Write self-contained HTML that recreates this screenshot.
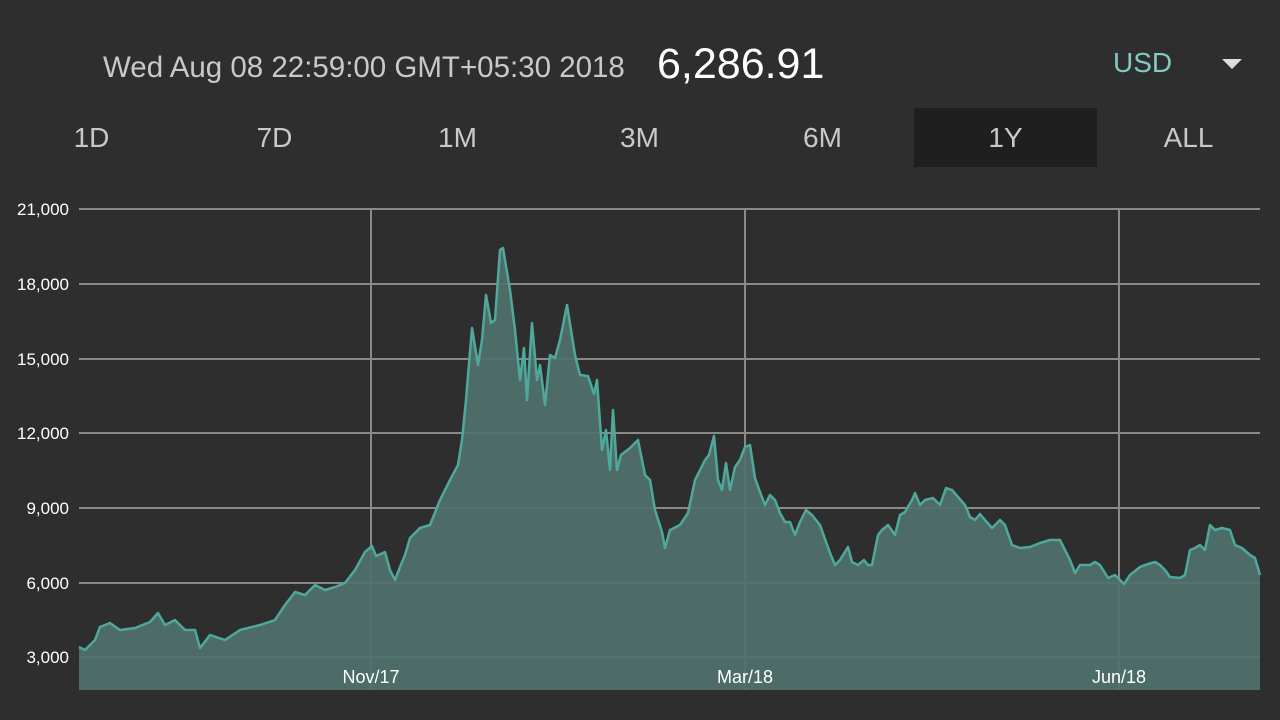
<!DOCTYPE html>
<html><head><meta charset="utf-8"><style>
body{margin:0;width:1280px;height:720px;background:#2e2e2e;font-family:"Liberation Sans",sans-serif;overflow:hidden;position:relative}
.t{position:absolute;white-space:nowrap}
.tab{position:absolute;top:108px;height:59px;width:183px;line-height:59px;text-align:center;font-size:28px;color:#c9c9c9}
</style></head><body>
<div class="t" style="left:103px;top:51px;font-size:29.5px;color:#c9c9c9">Wed Aug 08 22:59:00 GMT+05:30 2018</div>
<div class="t" style="left:657px;top:40px;font-size:43px;color:#fff">6,286.91</div>
<div class="t" style="left:1113px;top:47px;font-size:28px;color:#80cbc4">USD</div>
<svg class="t" style="left:1220px;top:57px" width="24" height="14"><path d="M2 2 L22 2 L12 12 Z" fill="#ddd"/></svg>
<div class="tab" style="left:0">1D</div>
<div class="tab" style="left:183px">7D</div>
<div class="tab" style="left:366px">1M</div>
<div class="tab" style="left:548px">3M</div>
<div class="tab" style="left:731px">6M</div>
<div class="tab" style="left:914px;background:#1f1f1f">1Y</div>
<div class="tab" style="left:1097px">ALL</div>
<svg class="t" style="left:0;top:0" width="1280" height="720">
<g font-size="17" fill="#fff" text-anchor="end" font-family="Liberation Sans">
<text x="69" y="215">21,000</text><text x="69" y="290">18,000</text><text x="69" y="365">15,000</text>
<text x="69" y="439">12,000</text><text x="69" y="514">9,000</text><text x="69" y="589">6,000</text><text x="69" y="663">3,000</text>
</g>
<g stroke="#8a8a8a" stroke-width="2">
<line x1="79" y1="209" x2="1260" y2="209"/><line x1="79" y1="284" x2="1260" y2="284"/><line x1="79" y1="359" x2="1260" y2="359"/>
<line x1="79" y1="433" x2="1260" y2="433"/><line x1="79" y1="508" x2="1260" y2="508"/><line x1="79" y1="583" x2="1260" y2="583"/><line x1="79" y1="657" x2="1260" y2="657"/>
<line x1="371" y1="209" x2="371" y2="690"/><line x1="745" y1="209" x2="745" y2="690"/><line x1="1119" y1="209" x2="1119" y2="690"/>
</g>
<polygon fill="#50716c" fill-opacity="0.93" points="79,690 79,647 85,650 95,640 100,627 110,623 120,630 135,628 150,622 158,613 165,625 175,620 185,630 195,630 200,648 210,635 225,640 240,630 260,625 275,620 285,605 295,592 305,595 315,585 325,590 335,587 345,583 355,570 365,552 372,546 376,556 385,552 390,570 395,580 400,567 405,555 410,538 420,528 430,525 440,500 450,480 458,465 462,440 466,400 472,328 478,365 482,340 486,295 491,323 495,320 500,250 503,248 510,290 515,330 520,380 524,348 527,400 532,323 537,380 540,365 545,405 550,355 555,358 560,340 567,305 575,355 580,375 588,376 594,394 597,380 602,450 606,430 610,470 613,410 617,470 621,455 630,448 638,440 645,475 650,480 655,510 662,532 665,548 670,530 680,525 688,513 695,480 700,470 705,460 709,455 714,436 718,480 722,490 726,463 730,490 735,467 740,460 745,447 750,445 755,478 760,492 765,505 770,495 775,500 780,513 785,522 790,522 795,535 800,522 806,510 812,515 820,525 830,553 835,565 840,560 848,547 852,562 858,565 864,560 868,565 872,565 878,535 882,530 888,525 895,535 900,515 905,512 912,500 915,493 920,505 925,500 933,498 940,505 946,488 952,490 958,497 965,505 970,517 975,520 980,514 985,520 992,528 1000,520 1005,525 1012,545 1020,548 1030,547 1040,543 1050,540 1060,540 1070,560 1075,573 1080,565 1090,565 1095,562 1100,565 1108,578 1115,575 1120,580 1124,584 1130,575 1140,567 1145,565 1155,562 1160,565 1165,570 1170,577 1180,578 1185,575 1190,550 1195,548 1200,545 1205,550 1210,525 1215,530 1222,528 1230,530 1235,545 1242,548 1250,555 1255,558 1260,575 1260,690"/>
<polyline fill="none" stroke="#4fa89c" stroke-width="2.5" stroke-linejoin="round" points="79,647 85,650 95,640 100,627 110,623 120,630 135,628 150,622 158,613 165,625 175,620 185,630 195,630 200,648 210,635 225,640 240,630 260,625 275,620 285,605 295,592 305,595 315,585 325,590 335,587 345,583 355,570 365,552 372,546 376,556 385,552 390,570 395,580 400,567 405,555 410,538 420,528 430,525 440,500 450,480 458,465 462,440 466,400 472,328 478,365 482,340 486,295 491,323 495,320 500,250 503,248 510,290 515,330 520,380 524,348 527,400 532,323 537,380 540,365 545,405 550,355 555,358 560,340 567,305 575,355 580,375 588,376 594,394 597,380 602,450 606,430 610,470 613,410 617,470 621,455 630,448 638,440 645,475 650,480 655,510 662,532 665,548 670,530 680,525 688,513 695,480 700,470 705,460 709,455 714,436 718,480 722,490 726,463 730,490 735,467 740,460 745,447 750,445 755,478 760,492 765,505 770,495 775,500 780,513 785,522 790,522 795,535 800,522 806,510 812,515 820,525 830,553 835,565 840,560 848,547 852,562 858,565 864,560 868,565 872,565 878,535 882,530 888,525 895,535 900,515 905,512 912,500 915,493 920,505 925,500 933,498 940,505 946,488 952,490 958,497 965,505 970,517 975,520 980,514 985,520 992,528 1000,520 1005,525 1012,545 1020,548 1030,547 1040,543 1050,540 1060,540 1070,560 1075,573 1080,565 1090,565 1095,562 1100,565 1108,578 1115,575 1120,580 1124,584 1130,575 1140,567 1145,565 1155,562 1160,565 1165,570 1170,577 1180,578 1185,575 1190,550 1195,548 1200,545 1205,550 1210,525 1215,530 1222,528 1230,530 1235,545 1242,548 1250,555 1255,558 1260,575"/>
<g font-size="18" fill="#fff" text-anchor="middle" font-family="Liberation Sans">
<text x="371" y="683">Nov/17</text><text x="745" y="683">Mar/18</text><text x="1119" y="683">Jun/18</text>
</g>
</svg>
</body></html>
